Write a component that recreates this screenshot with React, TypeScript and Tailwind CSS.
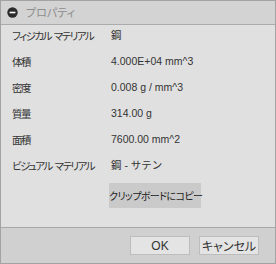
const rows = [
  { label: "フィジカル マテリアル", value: "鋼" },
  { label: "体積", value: "4.000E+04 mm^3" },
  { label: "密度", value: "0.008 g / mm^3" },
  { label: "質量", value: "314.00 g" },
  { label: "面積", value: "7600.00 mm^2" },
  { label: "ビジュアル マテリアル", value: "鋼 - サテン" },
];

const font = {
  fontFamily: '"Liberation Sans", "Noto Sans CJK JP", sans-serif',
};

const jp = {
  fontFamily: '"Noto Sans CJK JP", sans-serif',
  fontFeatureSettings: '"palt"',
};

export default function App() {
  return (
    <div
      className="flex h-[264px] w-[276px] flex-col border border-[#a3a3a3] bg-[#e0e0e0] text-[11px] text-[#333]"
      style={font}
    >
      <div className="flex h-[24px] shrink-0 items-center gap-[8px] border-b border-[#ababab] bg-[#d3d3d3] pl-[6px]">
        <svg width="11" height="11" viewBox="0 0 11 11">
          <circle cx="5.5" cy="5.5" r="5.2" fill="#2b2b2b" />
          <rect x="2.6" y="4.7" width="5.8" height="1.6" fill="#fff" />
        </svg>
        <span className="text-[#8c8c8c]" style={jp}>
          プロパティ
        </span>
      </div>

      <div className="-mt-[2px] flex-1 pl-[11px]">
        {rows.map((r) => (
          <div key={r.label} className="flex h-[26px] items-center whitespace-nowrap">
            <span
              className="w-[99px] shrink-0 text-[10.5px] tracking-[-1.5px] [word-spacing:2px]"
              style={jp}
            >
              {r.label}
            </span>
            <span className="text-[10.5px]">{r.value}</span>
          </div>
        ))}
        <div className="mt-[4px] pl-[97px]">
          <button
            className="h-[25px] w-[92px] whitespace-nowrap bg-[#cacaca] text-[10px] tracking-[-0.6px] text-[#222]"
            style={jp}
          >
            クリップボードにコピー
          </button>
        </div>
      </div>

      <div className="flex h-[36px] shrink-0 items-center justify-end gap-[9px] border-t border-[#a8a8a8] bg-[#d0d0d0] pr-[16px]">
        <button className="h-[19px] w-[60px] border border-[#bdbdbd] bg-[#e4e4e4] text-[12px] text-[#333]">
          OK
        </button>
        <button
          className="h-[19px] w-[60px] border border-[#bdbdbd] bg-[#e4e4e4] text-[12px] text-[#333]"
          style={jp}
        >
          キャンセル
        </button>
      </div>
    </div>
  );
}
